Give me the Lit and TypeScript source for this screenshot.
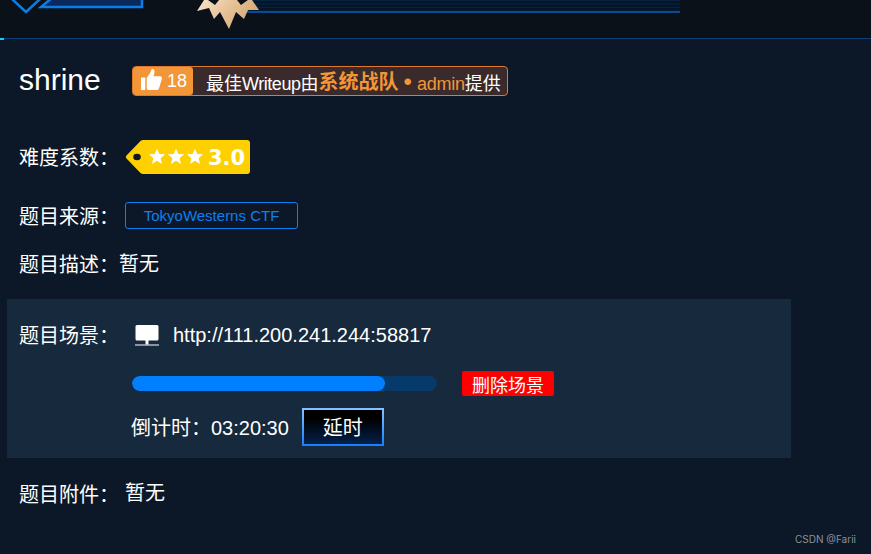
import { LitElement, html, css, svg } from "lit";
import { customElement } from "lit/decorators.js";

const COLON = "\uFF1A";

const star = (cx: number, cy: number, r: number) => {
  const pts: string[] = [];
  for (let i = 0; i < 10; i++) {
    const a = (Math.PI / 5) * i - Math.PI / 2;
    const rad = i % 2 === 0 ? r : r * 0.45;
    pts.push(`${(cx + rad * Math.cos(a)).toFixed(2)},${(cy + rad * Math.sin(a)).toFixed(2)}`);
  }
  return svg`<polygon points=${pts.join(" ")} fill="#fff" />`;
};

@customElement("app-root")
export class AppRoot extends LitElement {
  static styles = css`
    :host {
      display: block;
      width: 871px;
      height: 554px;
      position: relative;
      overflow: hidden;
      background: #0c1827;
      color: #fff;
      font-family: "Liberation Sans", "Noto Sans CJK SC", sans-serif;
      font-size: 20px;
    }
    .banner { display: block; width: 871px; height: 38px; }
    .rule { height: 2px; background: linear-gradient(#0a3f78 50%, #0c1827 50%); }
    .accent { width: 4px; height: 2px; background: #0fd0f5; }
    .main { padding-left: 19px; }
    .row { display: flex; align-items: center; height: 30px; line-height: 30px; }
    .title-row { margin-top: 26px; }
    .title { font-size: 30px; width: 113px; flex: none; margin-top: -2px; }
    .badge {
      width: 376px; height: 30px; box-sizing: border-box;
      border: 1px solid #e0782e; border-radius: 4px; background: #3a2a2b;
      display: flex; align-items: center; font-size: 18px; white-space: nowrap;
    }
    .like {
      width: 60px; height: 28px; background: #f39637; border-radius: 3px; flex: none;
      display: flex; align-items: center; padding-left: 8px; box-sizing: border-box; gap: 5px;
    }
    .like svg { display: block; margin-top: -4px; flex: none; }
    .bdtext { margin: 5px 0 0 13px; display: flex; align-items: center; }
    .latin { letter-spacing: -0.45px; }
    .org { color: #f39637; letter-spacing: -0.25px; }
    .team { color: #f39637; font-weight: bold; font-size: 20px; margin-top: -3px; }
    .dot { color: #f39637; font-size: 24px; margin: -3px 5px 0 5px; line-height: 20px; }
    .diff { margin-top: 44px; height: 34px; }
    .label { width: 106px; flex: none; padding-top: 2px; }
    .tag { display: block; }
    .tag text { font-family: "DejaVu Sans", "Open Sans", sans-serif; font-weight: 700; font-size: 21px; fill: #fff; }
    .source { margin-top: 28px; height: 27px; }
    .src-btn {
      width: 173px; height: 27px; box-sizing: border-box; border: 1px solid #0f7fef; border-radius: 3px;
      color: #0f7fef; font-size: 15px; display: flex; align-items: center; justify-content: center;
    }
    .desc { margin-top: 20px; }
    .desc .label { width: 100px; }
    .panel {
      margin: 20px 0 0 7px; width: 784px; height: 159px; box-sizing: border-box;
      background: #17293c; padding: 21px 0 0 12px;
    }
    .url-row .label { width: 116px; }
    .url-row svg { display: block; margin-right: 13px; flex: none; }
    .ctl { margin: 21px 0 0 113px; display: flex; align-items: center; height: 25px; }
    .track { width: 305px; height: 15px; border-radius: 8px; background: #063a6b; overflow: hidden; }
    .fill { height: 100%; background: #007fff; border-radius: 8px; }
    .del {
      margin-left: 25px; width: 92px; height: 25px; background: #ff0000; border-radius: 2px;
      font-size: 18px; display: flex; align-items: center; justify-content: center;
    }
    .count { margin: 12px 0 0 112px; display: flex; align-items: center; height: 38px; }
    .count span { margin-top: -2px; }
    .extend {
      margin-left: 13px; width: 82px; height: 38px; box-sizing: border-box; border: 2px solid;
      border-image: linear-gradient(#85c1ff, #1580ff) 1;
      background: linear-gradient(#000 25%, #04204a 100%);
      display: flex; align-items: center; justify-content: center; padding-bottom: 2px;
    }
    .attach { margin-top: 20px; }
    .attach .label { padding-top: 4px; }
    .wm {
      position: absolute; right: 15px; bottom: 8px; font-size: 10px; line-height: 13px;
      color: #8b929a; font-family: "Inter", "Liberation Sans", sans-serif;
    }
  `;

  render() {
    return html`
      <svg class="banner" viewBox="0 0 871 38" width="871" height="38">
        <defs>
          <linearGradient id="st" x1="0" x2="1" y1="0" y2="0.4"><stop offset="0" stop-color="#f7e6cc" /><stop offset="0.5" stop-color="#e8c49a" /><stop offset="1" stop-color="#d5a777" /></linearGradient>
          <pattern id="stripes" width="4" height="3.5" patternUnits="userSpaceOnUse"><rect width="4" height="3.5" fill="#02142b" /><rect width="4" height="1" fill="#07233f" /></pattern>
        </defs>
        <rect width="871" height="38" fill="#0a1118" />
        <polyline points="12,-1 26,12 40,-1" fill="none" stroke="#0b7de8" stroke-width="2.5" />
        <polygon points="52,-2 142,-2 142,7 41,7" fill="#0a2a5c" stroke="#0b7de8" stroke-width="2.5" />
        <rect x="247" y="0" width="433" height="11" fill="url(#stripes)" />
        <rect x="247" y="11" width="433" height="2" fill="#0b4a8c" />
        <polygon points="204,0 197,11 209,8 214,19 220,12 229,29 236,12 244,19 248,10 259,10 252,0 248,0 241,5 237,0 219,0 215,5 208,0" fill="url(#st)" />
      </svg>
      <div class="rule"><div class="accent"></div></div>
      <div class="main">
        <div class="row title-row">
          <span class="title">shrine</span>
          <div class="badge">
            <div class="like">
              <svg width="21" height="21" viewBox="0 0 22 20" preserveAspectRatio="none">
                <rect x="0" y="8" width="4.5" height="12" rx="0.8" fill="#fff" />
                <path d="M6 8.5 L10 3 C10.5 1.5 10.5 0.5 12 0 C14 0 14.5 2 14 4 L13 7 L20 7 C22 7 22.3 9 21.5 10.5 L19 18 C18.5 19.5 17.5 20 16 20 L9 20 C7.5 20 6 19.5 6 18 Z" fill="#fff" />
              </svg>
              <span>18</span>
            </div>
            <div class="bdtext">最佳<span class="latin">Writeup</span>由<span class="team">系统战队</span><span class="dot">•</span><span class="org">admin</span>提供</div>
          </div>
        </div>
        <div class="row diff">
          <span class="label">难度系数${COLON}</span>
          <svg class="tag" width="126" height="34" viewBox="0 0 126 34">
            <path d="M1.5 15.5 L15.5 1 Q16.5 0 18 0 L122 0 Q125 0 125 3 L125 31 Q125 34 122 34 L18 34 Q16.5 34 15.5 33 L1.5 18.5 Q0 17 1.5 15.5 Z" fill="#ffd000" />
            <ellipse cx="12" cy="17" rx="3.8" ry="3.2" fill="#0c1827" />
            ${star(32, 17, 8.5)}${star(51, 17, 8.5)}${star(70, 17, 8.5)}
            <text x="83" y="25">3.0</text>
          </svg>
        </div>
        <div class="row source">
          <span class="label">题目来源${COLON}</span>
          <div class="src-btn">TokyoWesterns CTF</div>
        </div>
        <div class="row desc">
          <span class="label">题目描述${COLON}</span>
          <span>暂无</span>
        </div>
      </div>
      <div class="panel">
        <div class="row url-row">
          <span class="label">题目场景${COLON}</span>
          <svg width="25" height="21" viewBox="0 0 25 21">
            <rect x="0.5" y="0" width="23" height="15.5" rx="1.5" fill="#fff" />
            <rect x="10.5" y="15" width="3" height="4.5" fill="#fff" />
            <rect x="0" y="19.5" width="24" height="1" fill="#fff" />
          </svg>
          <span>http://111.200.241.244:58817</span>
        </div>
        <div class="ctl">
          <div class="track"><div class="fill" style="width: ${(253 / 305) * 100}%"></div></div>
          <div class="del">删除场景</div>
        </div>
        <div class="count">
          <span>倒计时${COLON}03:20:30</span>
          <div class="extend">延时</div>
        </div>
      </div>
      <div class="main">
        <div class="row attach">
          <span class="label">题目附件${COLON}</span>
          <span>暂无</span>
        </div>
      </div>
      <div class="wm">CSDN @Farii</div>
    `;
  }
}
